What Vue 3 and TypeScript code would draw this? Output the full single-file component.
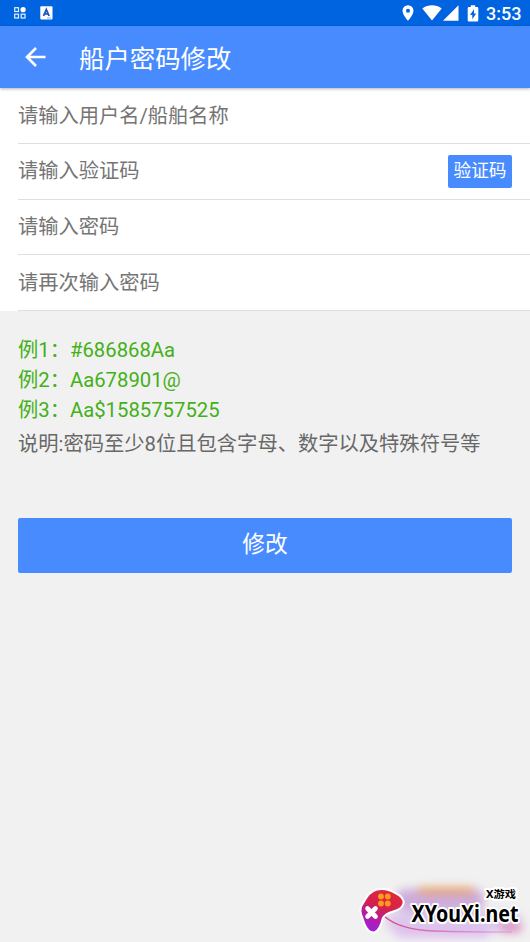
<script setup lang="ts">
import { reactive } from 'vue'

interface Field {
  key: 'user' | 'code' | 'password' | 'confirm'
  placeholder: string
  type: string
  action?: string
}

const fields: Field[] = [
  { key: 'user', placeholder: '请输入用户名/船舶名称', type: 'text' },
  { key: 'code', placeholder: '请输入验证码', type: 'text', action: '验证码' },
  { key: 'password', placeholder: '请输入密码', type: 'password' },
  { key: 'confirm', placeholder: '请再次输入密码', type: 'password' },
]

const form = reactive({ user: '', code: '', password: '', confirm: '' })

const examples: string[] = ['例1：#686868Aa', '例2：Aa678901@', '例3：Aa$1585757525']
</script>

<template>
  <div class="screen">
    <div class="status">
      <svg class="apps" viewBox="0 0 12 12" width="12" height="12">
        <g fill="none" stroke="#e4f0ff" stroke-width="1.2">
          <rect x="0.7" y="0.7" width="3.8" height="3.8" />
          <rect x="0.7" y="7.2" width="3.8" height="3.8" />
          <rect x="7.2" y="7.2" width="3.8" height="3.8" />
        </g>
        <circle cx="9.1" cy="2.7" r="2.6" fill="#fff" />
      </svg>
      <svg class="lang" viewBox="0 0 13 14" width="13" height="14">
        <rect x="0.3" y="0.3" width="12.2" height="13.2" rx="1" fill="#fff" />
        <path d="M3.5 10 6.3 3.5 9.1 10M4.6 7.8h3.4" fill="none" stroke="#1c56bd" stroke-width="1.8" />
        <path d="M7 12h4" stroke="#6e9be0" stroke-width="0.8" />
      </svg>
      <span class="grow"></span>
      <svg class="pin" viewBox="0 0 12 16" width="12" height="16">
        <path fill="#fff" fill-rule="evenodd" d="M6 .3A5.4 5.4 0 0 0 .5 5.700C.5 9.700 6 15.700 6 15.700s5.500-6 5.500-10A5.400 5.400 0 0 0 6 .3zm0 3.400a2 2 0 1 1 0 4 2 2 0 0 1 0-4z" />
      </svg>
      <svg class="wifi" viewBox="0 0 20 16" width="20" height="16">
        <path fill="#fff" d="M.3 3.500C6-.7 14-.7 19.700 3.500L10 15.600z" />
      </svg>
      <svg class="signal" viewBox="0 0 16 16" width="16" height="16">
        <path fill="#fff" d="M15.500.2v15.500H0z" />
      </svg>
      <svg class="battery" viewBox="0 0 12 17" width="12" height="17">
        <path fill="#fff" fill-rule="evenodd" d="M3.800.3h4.400V2h1.900q1.200 0 1.200 1.200v12q0 1.200-1.200 1.200H1.900Q.7 16.400.7 15.200v-12Q.7 2 1.900 2h1.900zM7 4.300 3 10h2.300v4.200L9.200 8.500H7z" />
      </svg>
      <span class="time">3:53</span>
    </div>

    <header class="bar">
      <svg class="back" viewBox="0 0 22 20" width="22" height="20">
        <path d="M11 1 2 10l9 9M2.200 10H20.500" fill="none" stroke="#fff" stroke-width="2.600" />
      </svg>
      <h1 class="title">船户密码修改</h1>
    </header>

    <form class="form" @submit.prevent>
      <div v-for="field in fields" :key="field.key" class="row">
        <input v-model="form[field.key]" class="input" :type="field.type" :placeholder="field.placeholder" />
        <button v-if="field.action" class="code" type="button">{{ field.action }}</button>
      </div>
    </form>

    <section class="hints">
      <p v-for="example in examples" :key="example" class="example">{{ example }}</p>
      <p class="note">说明:密码至少8位且包含字母、数字以及特殊符号等</p>
    </section>

    <button class="submit" type="button">修改</button>

    <svg class="brand" viewBox="0 0 190 72" width="190" height="72">
      <defs>
        <linearGradient id="pad" x1="0.75" y1="0" x2="0.25" y2="1">
          <stop offset="0" stop-color="#e02b38" />
          <stop offset="0.45" stop-color="#d3204f" />
          <stop offset="0.7" stop-color="#b51e9c" />
          <stop offset="1" stop-color="#a01fe0" />
        </linearGradient>
        <linearGradient id="tail" x1="0" x2="1">
          <stop offset="0" stop-color="#d14d86" />
          <stop offset="1" stop-color="#d580d5" stop-opacity="0.4" />
        </linearGradient>
        <filter id="soft" x="-30%" y="-80%" width="160%" height="260%">
          <feGaussianBlur stdDeviation="5" />
        </filter>
      </defs>
      <g filter="url(#soft)">
        <rect x="56" y="19" width="88" height="22" rx="9" fill="#b887d2" opacity="0.65" />
        <rect x="77" y="17" width="58" height="8" rx="4" fill="#e6a05c" opacity="0.85" />
        <rect x="46" y="42" width="136" height="20" rx="9" fill="#c9a0e8" opacity="0.5" />
        <rect x="55" y="58" width="95" height="10" rx="5" fill="#d9a8ef" opacity="0.6" />
        <rect x="160" y="54" width="22" height="8" rx="4" fill="#d5669e" opacity="0.7" />
      </g>
      <path d="M44 46Q60 60 94 61T172 62" fill="none" stroke="url(#tail)" stroke-width="1.600" />
      <path d="M37 20.500Q46 18.500 55 24Q63.500 28 62.500 33.500Q61 38.500 53 40.500Q45 42.500 42 47.500Q39 60 34 61.500Q29 62 25.500 54L21.800 43.500Q20.500 38 24 33.500Q30 22 37 20.500Z" fill="url(#pad)" stroke="#fff" stroke-width="4" stroke-linejoin="round" paint-order="stroke" />
      <g fill="#ff9b18">
        <circle cx="41" cy="26.500" r="2.900" />
        <circle cx="47.800" cy="26.500" r="2.900" />
        <circle cx="41" cy="33.500" r="2.900" />
        <circle cx="47.800" cy="33.500" r="2.900" />
      </g>
      <path d="M27.500 38.500l8 8M35.500 38.500l-8 8" stroke="#fff" stroke-width="4.600" stroke-linecap="round" />
      <text class="brand-small" x="146" y="28" textLength="30" lengthAdjust="spacingAndGlyphs">X游戏</text>
      <text class="brand-name" x="71.500" y="51.700" textLength="107" lengthAdjust="spacingAndGlyphs">XYouXi.net</text>
    </svg>
  </div>
</template>

<style>
body {
  margin: 0;
  background: #f1f1f1;
}
</style>

<style scoped>
.screen {
  position: relative;
  display: flex;
  flex-direction: column;
  height: 942px;
  overflow: hidden;
  background: #f1f1f1;
  font-family: Roboto, "Noto Sans CJK SC", sans-serif;
}

.status {
  display: flex;
  align-items: center;
  flex: none;
  box-sizing: border-box;
  height: 26px;
  padding: 0 9px 0 14px;
  background: #0064e0;
}

.lang {
  margin-left: 14px;
}

.grow {
  flex: 1;
}

.wifi {
  margin-left: 8px;
}

.signal {
  margin-left: 1px;
}

.battery {
  margin-left: 8px;
}

.time {
  width: 35px;
  margin: 2px 0 0 7px;
  color: #fff;
  font-size: 18px;
  font-weight: 500;
  line-height: 24px;
  white-space: nowrap;
}

.bar {
  z-index: 1;
  display: flex;
  align-items: center;
  flex: none;
  height: 62px;
  padding-left: 25px;
  background: #488bff;
  box-shadow: 0 1px 3px rgba(0, 0, 0, 0.3);
}

.title {
  margin: 0;
  padding: 3px 0 0 32px;
  color: #fff;
  font-size: 25.400px;
  font-weight: 400;
  line-height: 36px;
}

.form {
  flex: none;
  box-sizing: border-box;
  height: 223px;
  padding-top: 0.600px;
  background: #fff;
}

.row {
  display: flex;
  align-items: center;
  box-sizing: border-box;
  height: 55.600px;
  margin-left: 18px;
  padding-right: 18px;
  border-bottom: 1px solid #dedede;
}

.input {
  flex: 1;
  min-width: 0;
  height: 40px;
  margin: 0;
  padding: 0;
  border: 0;
  outline: 0;
  background: none;
  color: #333;
  font: 20.250px Roboto, "Noto Sans CJK SC", sans-serif;
}

.input::placeholder {
  color: #757575;
  opacity: 1;
}

.code {
  width: 64px;
  height: 33px;
  padding: 0;
  border: 0;
  border-radius: 2px;
  background: #488bff;
  color: #fff;
  font: 17.700px/33px Roboto, "Noto Sans CJK SC", sans-serif;
}

.hints {
  flex: none;
  padding: 25px 18px 0;
  font-size: 20.300px;
}

.example {
  margin: 0;
  color: #44b018;
  line-height: 29.800px;
}

.note {
  margin: 3.600px 0 0;
  color: #686868;
  line-height: 30px;
  white-space: nowrap;
}

.submit {
  flex: none;
  height: 55px;
  margin: 59px 18px 0;
  padding: 0 0 5px;
  border: 0;
  border-radius: 2px;
  background: #488bff;
  color: #fff;
  font: 22.700px Roboto, "Noto Sans CJK SC", sans-serif;
}

.brand {
  position: absolute;
  right: 0;
  bottom: 0;
  overflow: visible;
}

.brand-small,
.brand-name {
  fill: #000;
  stroke: #fff;
  stroke-width: 4px;
  stroke-linejoin: round;
  paint-order: stroke;
  font-weight: 700;
}

.brand-small {
  font-family: "Noto Sans", "Noto Sans CJK SC", sans-serif;
  font-size: 10.500px;
}

.brand-name {
  font-family: "Noto Sans", sans-serif;
  font-size: 23.500px;
}
</style>
